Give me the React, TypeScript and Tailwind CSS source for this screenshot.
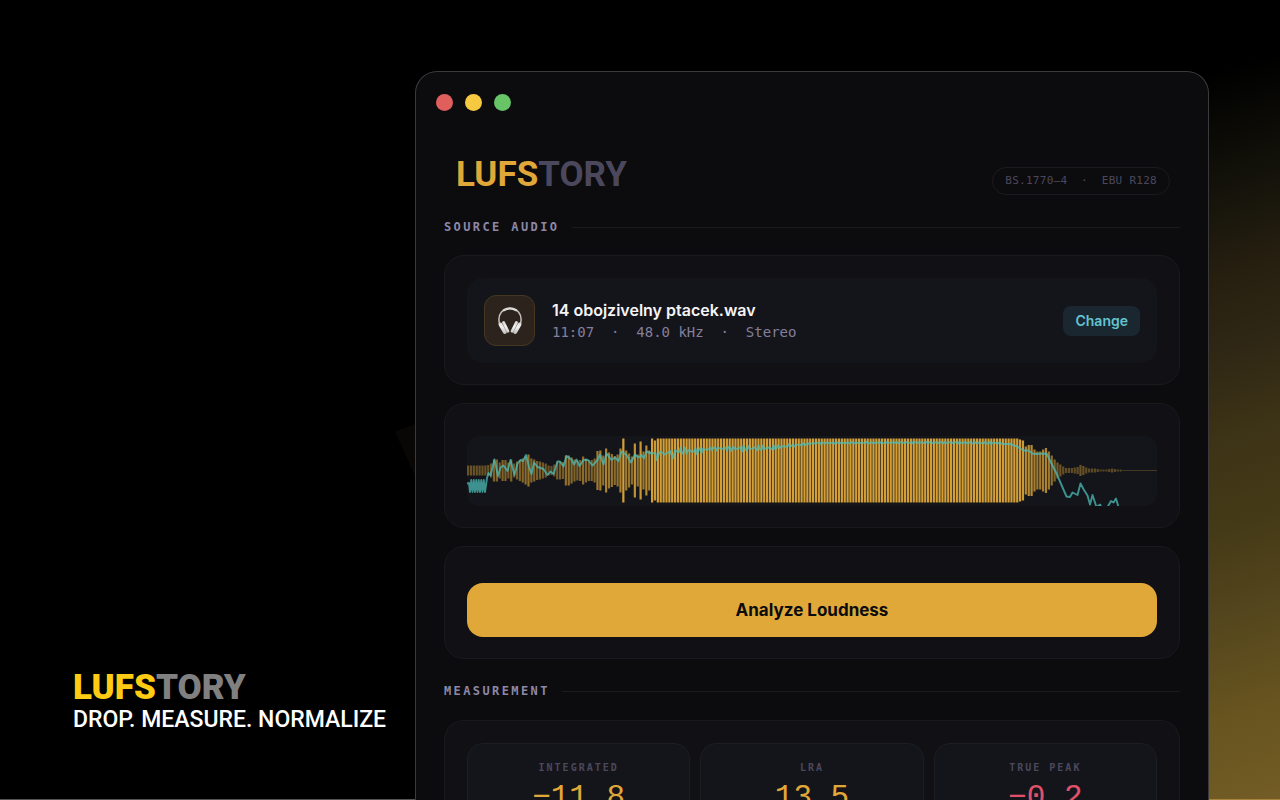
import React from 'react';

const STATS = [
  { label: 'INTEGRATED', value: '−11.8', color: 'text-[#e0a838]' },
  { label: 'LRA', value: '13.5', color: 'text-[#e0a838]' },
  { label: 'TRUE PEAK', value: '−0.2', color: 'text-[#e0526a]' },
];

// Bar half-heights, intro and fade-out; everything in between is at full scale
const BAR_COUNT = 240;
const FULL = 32;
const INTRO = [
  5, 5, 5, 5, 5, 5, 5, 5.5, 7, 11, 11, 8, 10.5, 10.5, 8, 11, 7, 9, 10.5, 12, 14, 16, 12, 11, 9.5, 9, 8, 7, 5, 4.5, 6, 9, 9,
  8.5, 15, 15, 13, 11, 10, 10.5, 14, 12, 10.5, 10.5, 12, 19.5, 20, 15, 22, 18, 16.5, 14.5, 16, 22, 32, 20, 17, 14, 27, 16,
  29, 19, 25, 20, 32, 30,
];
const OUTRO_START = 192;
const OUTRO = [
  31, 30, 24, 25.5, 25.5, 21, 19, 19, 21, 22.5, 19, 15, 11, 8, 6, 4, 2.5, 2.5, 2.5, 3, 3.5, 5.5, 4.5, 3, 2, 2, 2, 1.5, 1, 1, 1,
  1.5, 2, 1.5, 1, 1,
];

const barHeight = (i: number) => {
  if (i < INTRO.length) return INTRO[i];
  if (i < OUTRO_START) return FULL;
  return OUTRO[i - OUTRO_START] ?? 0.5;
};

type Point = [number, number];

const LINE_START: Point[] = [
  [20, 42], [21.5, 37], [23.5, 39.5], [27.5, 23.5], [31, 40], [33.5, 31.5], [36.5, 29.5], [40.5, 35], [43.5, 24], [47.5, 39],
  [50.5, 27.5], [53.5, 24], [56, 25], [59, 19], [62, 31], [64.5, 38], [67, 26.5], [70.5, 31], [76.5, 33], [80.5, 39],
  [83.5, 35.5], [86.5, 38], [90.5, 25.5], [93, 25.5], [96.5, 30.5], [99.5, 20], [104.5, 23.5], [107, 28.5], [109.5, 23.5],
  [112.5, 30], [116.5, 24], [121, 24], [125.5, 29.5], [130.5, 24], [133, 18.5], [136.5, 28.5], [139.5, 17.5], [144.5, 24],
  [148, 21.5], [151.5, 25], [154.5, 15.5], [159.5, 19], [164, 26.5], [168, 18.5], [171.5, 21.5], [174.5, 19], [177, 22.5],
  [179.5, 15.5], [184.5, 17.5], [188.5, 17], [189.5, 24], [193, 15.5], [198, 18.5], [203, 15], [206, 22.5], [208, 14],
];

const LINE_END: Point[] = [
  [536, 8], [543, 8], [550, 10.5], [556.5, 14.5], [561, 14.5], [566.5, 18], [579.5, 17.5], [584.5, 27.5], [589.5, 37.5],
  [599.5, 60.5], [603, 61], [605.5, 56.5], [610.5, 59], [613.5, 47.5], [617, 54], [620.5, 59.5], [623, 68.5], [625.5, 59],
  [629.5, 71], [633, 68.5], [635, 72], [640, 72], [644, 65], [646.5, 66.5], [649, 62.5], [651.5, 71],
];

// Loudness centre and jitter over the loud part
const LINE_MID: [number, number, number][] = [
  [208, 15, 4], [230, 15, 4], [245, 12.5, 2], [275, 12.5, 3.5], [305, 12, 3], [316, 10.5, 2], [350, 7, 1], [463, 6.5, 1], [536, 7, 1.5],
];

const buildLine = () => {
  const pts: Point[] = [[0, 47.5], [2, 47]];
  for (let i = 0; i < 13; i += 1) pts.push([3 + i * 1.25, i % 2 ? 44 : 56]);
  pts.push(...LINE_START);
  for (let x = 209; x < 536; x += 1.5) {
    const k = LINE_MID.findIndex((m) => m[0] > x);
    const [x0, y0, j0] = LINE_MID[k - 1];
    const [x1, y1, j1] = LINE_MID[k];
    const t = (x - x0) / (x1 - x0);
    const jitter = j0 + (j1 - j0) * t;
    pts.push([x, y0 + (y1 - y0) * t + Math.sin(x * 2.3) * Math.sin(x * 0.61) * jitter]);
  }
  pts.push(...LINE_END);
  return pts.map(([x, y]) => `${x},${y.toFixed(1)}`).join(' ');
};

const Waveform: React.FC = () => (
  <svg viewBox="0 0 690 70" preserveAspectRatio="none" className="block w-full h-[70px] rounded-xl bg-[#13151a]">
    {Array.from({ length: BAR_COUNT }, (_, i) => {
      const h = barHeight(i);
      return (
        <rect
          key={i}
          x={i * 2.875}
          y={34.5 - h}
          width={h < 1 ? 2.875 : 2.2}
          height={h * 2}
          fill="#e0a838"
          opacity={h < 1 ? 0.25 : 0.32 + 0.62 * (h / FULL)}
        />
      );
    })}
    <polyline points={buildLine()} fill="none" stroke="#4cbcb8" strokeWidth="1.9" strokeLinejoin="round" opacity="0.75" />
  </svg>
);

const Headphones: React.FC = () => (
  <svg viewBox="0 0 24 28" className="w-6 h-7" fill="none" strokeLinecap="round">
    <defs>
      <linearGradient id="cup" gradientUnits="userSpaceOnUse" x1="0" y1="13" x2="0" y2="27">
        <stop offset="0" stopColor="#d0cecb" />
        <stop offset="0.5" stopColor="#f2f1ef" />
        <stop offset="1" stopColor="#bcbab7" />
      </linearGradient>
    </defs>
    <path d="M1.300 16C-0.600 6.500 5 1.500 12 1.500S24.600 6.500 22.700 16" stroke="#c4c1bd" strokeWidth="1.500" />
    <path d="M5.800 3.200C9.500 1.100 14.500 1.100 18.200 3.200" stroke="#dbd9d6" strokeWidth="2.200" />
    <g stroke="url(#cup)">
      <path d="M2.500 17.500L6.800 25M21.500 17.500L17.200 25" strokeWidth="3.800" />
      <path d="M5.600 15.600L9.800 24.200M18.400 15.600L14.200 24.200" strokeWidth="3" />
    </g>
    <path d="M4.200 16L8.800 25.400M19.800 16L15.200 25.400" stroke="#97938e" strokeWidth="0.500" />
  </svg>
);

const SectionTitle: React.FC<{ children: React.ReactNode }> = ({ children }) => (
  <div className="flex items-center gap-3">
    <h2 className="font-['DejaVu_Sans_Mono',monospace] text-[12px] leading-4 font-bold tracking-[0.2em] text-[#8d88a8]">{children}</h2>
    <div className="h-px flex-1 bg-[#1b1b1e]" />
  </div>
);

const AppWindow: React.FC = () => (
  <section className="mt-[71px] min-w-0 flex-1 rounded-t-[22px] border border-b-0 border-[#3a3a3c] bg-[#0c0c0e] px-7">
    {/* Traffic lights */}
    <div className="-ml-2 flex gap-3 pt-[22px]">
      <span className="size-[17px] rounded-full bg-[#e05f5d]" />
      <span className="size-[17px] rounded-full bg-[#f6c940]" />
      <span className="size-[17px] rounded-full bg-[#67c467]" />
    </div>

    <header className="mt-11 flex items-end justify-between pl-3 pr-[10px]">
      <h1 className="font-[Roboto,sans-serif] text-[35px] leading-10 font-bold text-[#e0a838]">
        LUFS<span className="text-[#4b485d]">TORY</span>
      </h1>
      <div className="whitespace-pre rounded-full border border-[#1b1b1f] px-3 py-[5px] font-['DejaVu_Sans_Mono',monospace] text-[11px] leading-4 tracking-wide text-[#4b485d]">
        {'BS.1770–4  ·  EBU R128'}
      </div>
    </header>

    <div className="mt-6">
      <SectionTitle>SOURCE AUDIO</SectionTitle>
    </div>

    <div className="mt-5 flex flex-col gap-[18px]">
      <div className="rounded-[20px] border border-[#1a1a1e] bg-[#111115] px-[22px] pt-[22px] pb-[21px]">
        <div className="flex items-center gap-[17px] rounded-2xl bg-[#14151a] p-[17px]">
          <div className="flex size-[51px] items-center justify-center rounded-xl border border-[#463721] bg-[#2c241c]">
            <Headphones />
          </div>
          <div className="min-w-0 flex-1">
            <p className="font-[Inter,sans-serif] text-[16px] leading-[22px] font-semibold text-[#f4f4f6]">14 obojzivelny ptacek.wav</p>
            <p className="whitespace-pre font-['DejaVu_Sans_Mono',monospace] text-[14px] leading-[22px] text-[#837f9c]">
              {'11:07  ·  48.0 kHz  ·  Stereo'}
            </p>
          </div>
          <button type="button" className="rounded-lg bg-[#1a2730] px-3 py-[5px] font-[Inter,sans-serif] text-[14px] leading-5 font-semibold text-[#62c4cf]">
            Change
          </button>
        </div>
      </div>

      <div className="rounded-[20px] border border-[#1a1a1e] bg-[#111115] px-[22px] pt-8 pb-[21px]">
        <Waveform />
      </div>

      <div className="rounded-[20px] border border-[#1a1a1e] bg-[#111115] px-[22px] pt-9 pb-[21px]">
        <button type="button" className="block w-full rounded-2xl bg-[#e0a838] py-[15px] font-[Inter,sans-serif] text-[17px] leading-6 font-bold text-[#0c0c0e]">
          Analyze Loudness
        </button>
      </div>
    </div>

    <div className="mt-6">
      <SectionTitle>MEASUREMENT</SectionTitle>
    </div>

    <div className="mt-[21px] grid grid-cols-3 gap-[10px] rounded-t-[20px] border border-b-0 border-[#1a1a1e] bg-[#111115] p-[22px]">
      {STATS.map((s) => (
        <div key={s.label} className="rounded-2xl border border-[#1d1e23] bg-[#14151a] pt-4 pb-5 text-center">
          <p className="font-['DejaVu_Sans_Mono',monospace] text-[10px] leading-4 font-bold tracking-[0.2em] text-[#4b485d]">{s.label}</p>
          <p className={`mt-1 font-['Liberation_Mono',monospace] text-[31px] leading-9 ${s.color}`}>{s.value}</p>
        </div>
      ))}
    </div>
  </section>
);

export default function App() {
  return (
    <main className="flex h-screen overflow-hidden bg-black">
      <aside className="relative flex w-[415px] shrink-0 flex-col justify-end border-b border-[#555] pb-[65px] pl-[73px]">
        {/* Edge of the glow behind the window */}
        <div className="absolute top-[424px] right-0 h-[52px] w-5 bg-[#080705] [clip-path:polygon(0_15%,100%_0,100%_100%)]" />
        <p className="font-[Roboto,sans-serif] text-[35px] leading-9 font-black text-[#ffcb13]">
          LUFS<span className="text-[#808080]">TORY</span>
        </p>
        <p className="whitespace-nowrap font-[Roboto,sans-serif] text-[23px] leading-7 font-medium text-white">DROP. MEASURE. NORMALIZE</p>
      </aside>
      <AppWindow />
      <div className="w-[71px] shrink-0 border-b border-[#a5863a] bg-[linear-gradient(162deg,#000_9%,#13120a_23%,#261f10_34%,#302815_44%,#3d3316_54%,#453a17_65%,#54461d_76%,#67541f_88%,#735c26_100%)]" />
    </main>
  );
}
